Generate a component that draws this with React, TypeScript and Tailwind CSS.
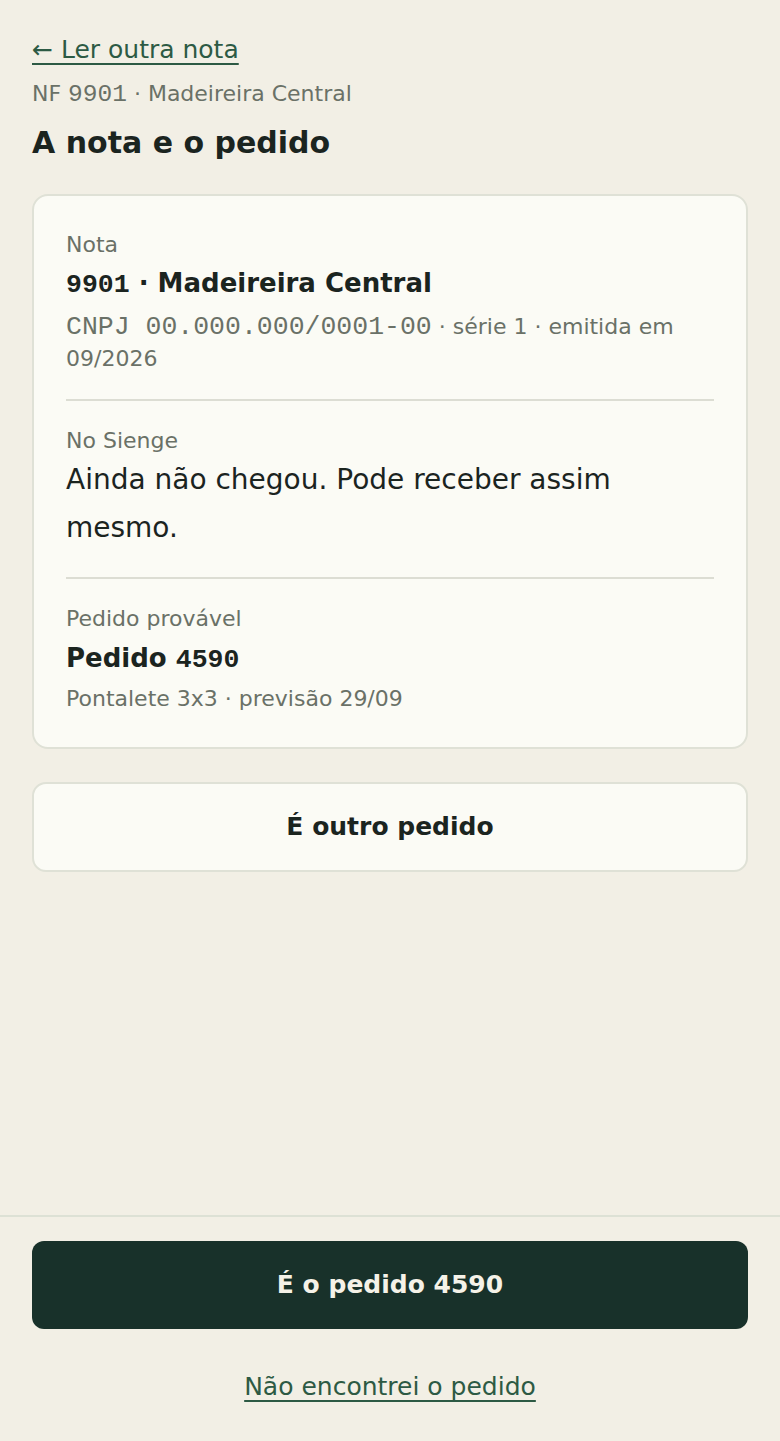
const mono = "font-['Liberation_Mono','DejaVu_Sans_Mono',monospace]";

function Divider() {
  return <div className="h-[2px] bg-[#dcddd3]" />;
}

export default function App() {
  return (
    <div className="flex min-h-[1441px] flex-col bg-[#f2efe5] font-['DejaVu_Sans','Liberation_Sans',sans-serif] text-[#1b241f]">
      <main className="flex-1 px-8 pt-[33px]">
        <a href="#" className="text-[25px] leading-[34px] text-[#2d5a44] underline decoration-[2px] underline-offset-[5px]">
          ← Ler outra nota
        </a>
        <p className="mt-[12px] text-[22px] leading-[30px] text-[#6a7167]">
          NF <span className={mono + " text-[24.5px]"}>9901</span> · Madeireira Central
        </p>
        <h1 className="mt-[13px] text-[30px] font-bold leading-[40px]">A nota e o pedido</h1>

        {/* Card */}
        <section className="mt-[31px] rounded-[16px] border-2 border-[#dfe1d6] bg-[#fbfbf5] px-[32px] pb-[32px] pt-[34px]">
          <div className="pb-[24px]">
            <p className="text-[22px] leading-[30px] text-[#6a7167]">Nota</p>
            <p className="mt-[5px] text-[26px] font-bold leading-[36px]">
              <span className={mono + " text-[26.5px]"}>9901</span> · Madeireira Central
            </p>
            <p className="mt-[8px] text-[22px] leading-[32px] text-[#6a7167]">
              <span className={mono + " text-[26.5px]"}>CNPJ 00.000.000/0001-00</span>{" "}
              · série 1 · emitida em 09/2026
            </p>
          </div>
          <Divider />
          <div className="pb-[25px] pt-[25px]">
            <p className="text-[22px] leading-[30px] text-[#6a7167]">No Sienge</p>
            <p className="text-[28px] leading-[48px]">Ainda não chegou. Pode receber assim mesmo.</p>
          </div>
          <Divider />
          <div className="pt-[25px]">
            <p className="text-[22px] leading-[30px] text-[#6a7167]">Pedido provável</p>
            <p className="mt-[6px] text-[26px] font-bold leading-[36px]">
              Pedido <span className={mono + " text-[26.5px]"}>4590</span>
            </p>
            <p className="mt-[5px] text-[22px] leading-[32px] text-[#6a7167]">Pontalete 3x3 · previsão 29/09</p>
          </div>
        </section>

        <button className="mt-[33px] h-[90px] w-full rounded-[14px] border-2 border-[#dfe1d6] bg-[#fbfbf5] text-[25px] font-bold text-[#1b241f]">
          É outro pedido
        </button>
      </main>

      {/* Footer actions */}
      <footer className="border-t-2 border-[#dde1d5] px-8 pb-[36px] pt-[24px]">
        <button className="h-[88px] w-full rounded-[12px] bg-[#18312a] text-[25px] font-bold text-[#f5f2e8]">
          É o pedido 4590
        </button>
        <div className="mt-[40px] text-center">
          <a href="#" className="text-[25px] leading-[36px] text-[#2d5a44] underline decoration-[2px] underline-offset-[5px]">
            Não encontrei o pedido
          </a>
        </div>
      </footer>
    </div>
  );
}
